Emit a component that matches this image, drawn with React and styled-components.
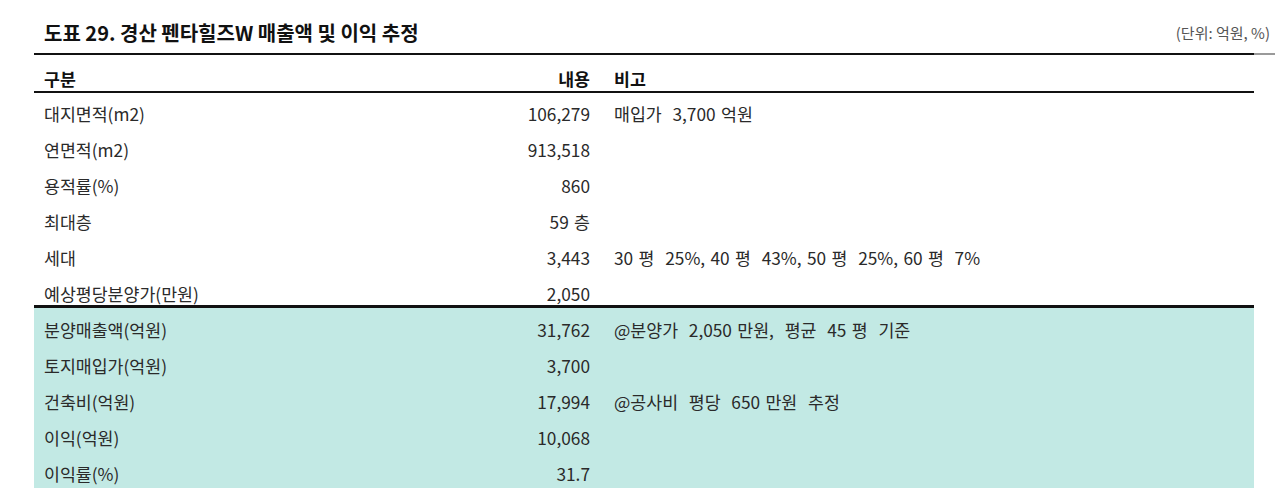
import styled, { createGlobalStyle } from 'styled-components';

const GlobalStyle = createGlobalStyle`
  body {
    margin: 0;
    background: #ffffff;
    font-family: "Noto Sans CJK KR", "Noto Sans", sans-serif;
    color: #222;
  }
`;

const Wrapper = styled.div`
  margin-left: 34px;
  width: 1241px;
`;

const TitleBar = styled.div`
  display: flex;
  justify-content: space-between;
  align-items: center;
  height: 53px;
  padding: 21px 5px 8px 10px;
  box-sizing: border-box;
`;

const Title = styled.h1`
  margin: 0;
  font-size: 20px;
  font-weight: 700;
  line-height: 24px;
  color: #111;
`;

const Unit = styled.span`
  font-size: 15px;
  line-height: 24px;
  color: #555;
`;

const Rule = styled.div`
  height: 2px;
  background: linear-gradient(to right, #111 0 1220px, #9a9a9a 1220px);
`;

const Table = styled.div`
  width: 1220px;
  display: grid;
  grid-template-columns: 406px 150px 1fr;
`;

const Row = styled.div`
  display: contents;
`;

const Cell = styled.div`
  height: ${(p) => p.$h}px;
  padding-top: ${(p) => p.$pt}px;
  box-sizing: border-box;
  font-size: 17.3px;
  line-height: 22px;
  white-space: pre;
  word-spacing: 1.5px;
  font-weight: ${(p) => (p.$head ? 700 : 400)};
  color: ${(p) => (p.$head ? '#111' : '#2a2a2a')};
  background: ${(p) => (p.$teal ? '#c2e9e4' : 'transparent')};
  border-bottom: ${(p) => p.$border || 'none'};
`;

const Label = styled(Cell)`
  padding-left: 10px;
`;

const Value = styled(Cell)`
  text-align: right;
`;

const Note = styled(Cell)`
  padding-left: 24px;
`;

const basicRows = [
  ['대지면적(m2)', '106,279', '매입가  3,700 억원'],
  ['연면적(m2)', '913,518', ''],
  ['용적률(%)', '860', ''],
  ['최대층', '59 층', ''],
  ['세대', '3,443', '30 평  25%, 40 평  43%, 50 평  25%, 60 평  7%'],
  ['예상평당분양가(만원)', '2,050', ''],
];

const salesRows = [
  ['분양매출액(억원)', '31,762', '@분양가  2,050 만원,  평균  45 평  기준'],
  ['토지매입가(억원)', '3,700', ''],
  ['건축비(억원)', '17,994', '@공사비  평당  650 만원  추정'],
  ['이익(억원)', '10,068', ''],
  ['이익률(%)', '31.7', ''],
];

function TableRow({ data, h, pt, teal, border, head }) {
  const props = { $h: h, $pt: pt, $teal: teal, $border: border, $head: head };
  return (
    <Row>
      <Label {...props}>{data[0]}</Label>
      <Value {...props}>{data[1]}</Value>
      <Note {...props}>{data[2]}</Note>
    </Row>
  );
}

export default function App() {
  const last = basicRows.length - 1;
  return (
    <>
      <GlobalStyle />
      <Wrapper>
        <TitleBar>
          <Title>도표 29. 경산 펜타힐즈W 매출액 및 이익 추정</Title>
          <Unit>(단위: 억원, %)</Unit>
        </TitleBar>
        <Rule />
        <Table>
          <TableRow data={['구분', '내용', '비고']} h={38} pt={13} head border="2px solid #111" />
          {basicRows.map((r, i) => (
            <TableRow
              key={r[0]}
              data={r}
              h={i === last ? 35 : 36}
              pt={10}
              border={i === last ? '3px solid #111' : 'none'}
            />
          ))}
          {salesRows.map((r) => (
            <TableRow key={r[0]} data={r} h={36} pt={11} teal />
          ))}
        </Table>
      </Wrapper>
    </>
  );
}
